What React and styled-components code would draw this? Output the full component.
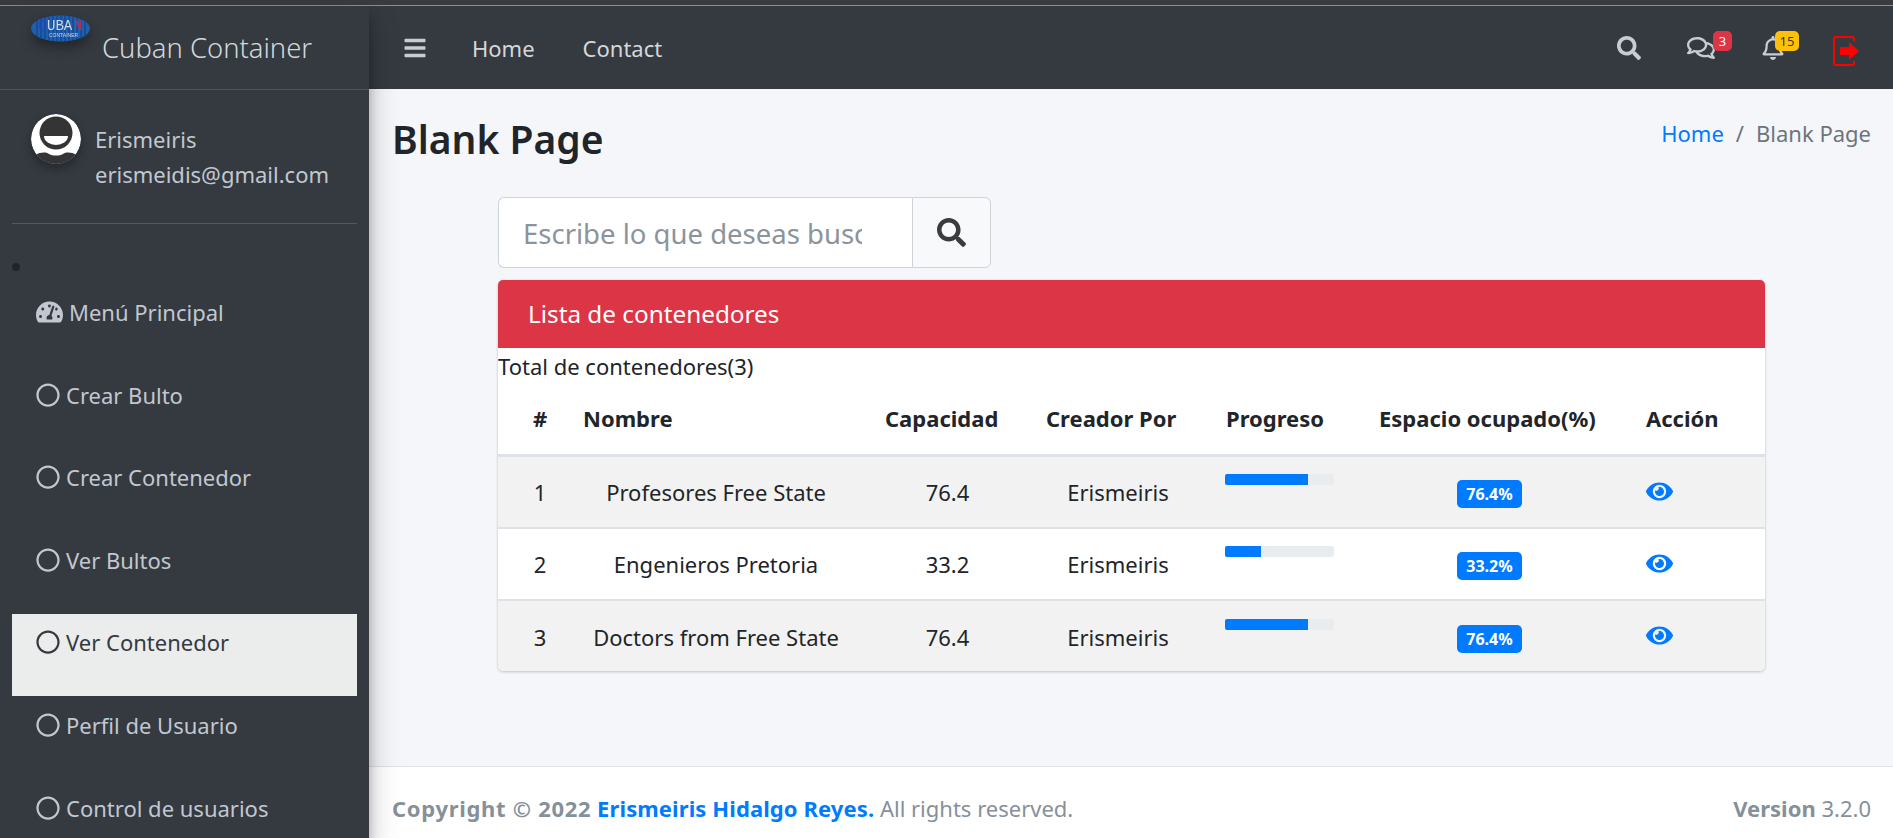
import styled, { createGlobalStyle } from 'styled-components'
import {
    FaBars,
    FaEye,
    FaRegBell,
    FaRegCircle,
    FaRegComments,
    FaSearch,
    FaTachometerAlt,
} from 'react-icons/fa'

const GlobalStyle = createGlobalStyle`
    html, body {
        margin: 0;
        height: 100%;
        overflow: hidden;
    }
    body {
        font-family: "Noto Sans", "Open Sans", sans-serif;
        font-size: 22px;
        color: #212529;
        background: #f4f6f9;
    }
    * {
        box-sizing: border-box;
    }
`;

const Page = styled.div`
    display: flex;
    flex-direction: column;
    height: 100vh;
`;

const TopStrip = styled.div`
    height: 6px;
    flex: none;
    background: #3b3b3b;
    border-bottom: 1px solid #8b8d8f;
`;

const Shell = styled.div`
    display: flex;
    flex: 1;
    min-height: 0;
`;

const Sidebar = styled.aside`
    width: 369px;
    flex: none;
    background: #343a40;
    color: #c2c7d0;
    overflow: hidden;
    position: relative;
    z-index: 2;
    box-shadow: 0 14px 28px rgba(0, 0, 0, 0.25), 0 10px 10px rgba(0, 0, 0, 0.22);
`;

const Brand = styled.div`
    display: flex;
    align-items: center;
    height: 84px;
    padding: 0 0 0 31px;
    border-bottom: 1px solid #4b545c;
    position: relative;
`;

const BrandLogo = styled.svg`
    width: 59px;
    height: 27px;
    margin: -38px 12px 0 0;
    filter: drop-shadow(0 6px 6px rgba(0, 0, 0, 0.35));
`;

const BrandName = styled.span`
    font-size: 27.4px;
    font-weight: 300;
    color: #d3d6da;
    margin-top: -1px;
`;

const UserPanel = styled.div`
    display: flex;
    margin: 0 12px;
    padding: 24px 0 0 19px;
    height: 134px;
    border-bottom: 1px solid #4f5962;
`;

const Avatar = styled.svg`
    width: 50px;
    height: 50px;
    flex: none;
    margin-right: 14px;
    border-radius: 50%;
    box-shadow: 0 5px 10px rgba(0, 0, 0, 0.3);
`;

const UserText = styled.div`
    display: flex;
    flex-direction: column;
    gap: 7px;
    padding-top: 11px;
    line-height: 28px;
`;

const Bullet = styled.div`
    width: 8px;
    height: 8px;
    margin: 39px 0 0 12px;
    border-radius: 50%;
    background: #212529;
`;

const Menu = styled.nav`
    display: flex;
    flex-direction: column;
    margin-top: 13px;
    padding: 0 12px;
`;

const MenuItem = styled.a`
    display: flex;
    align-items: flex-start;
    gap: 6px;
    height: 82px;
    margin-bottom: 0.6px;
    padding: 14px 0 0 24px;
    line-height: 28px;
    color: ${({ $active }) => ($active ? '#343a40' : '#c2c7d0')};
    background: ${({ $active }) => ($active ? '#ebecec' : 'transparent')};

    svg {
        flex: none;
        width: ${({ $wide }) => ($wide ? '27px' : '24px')};
        height: 28px;
    }
`;

const Main = styled.div`
    display: flex;
    flex: 1;
    flex-direction: column;
    min-width: 0;
`;

const Navbar = styled.header`
    display: flex;
    align-items: center;
    height: 83px;
    flex: none;
    padding: 0 34px 0 34px;
    background: #343a40;
    color: #c9ccd0;
`;

const NavLink = styled.a`
    margin-left: ${({ $gap }) => $gap}px;
    color: #d5d7da;
`;

const NavIcons = styled.div`
    display: flex;
    align-items: center;
    margin-left: auto;
`;

const NavIcon = styled.span`
    position: relative;
    display: flex;
    margin-left: ${({ $gap }) => $gap}px;
    color: #c9ccd0;
`;

const Count = styled.span`
    position: absolute;
    top: ${({ $top }) => $top}px;
    left: ${({ $left }) => $left}px;
    min-width: ${({ $warning }) => ($warning ? '24px' : '19px')};
    height: 20px;
    padding: 0 2px;
    border-radius: 5px;
    font-size: 13px;
    line-height: 20px;
    text-align: center;
    color: ${({ $warning }) => ($warning ? '#343a40' : '#fff')};
    background: ${({ $warning }) => ($warning ? '#ffc107' : '#dc3545')};
`;

const ExitIcon = styled.svg`
    width: 27px;
    height: 30px;
    margin: 6px 0 0 47px;
`;

const Content = styled.main`
    flex: 1;
    min-height: 0;
    padding: 0 22px 0 23px;
    background: #f4f6f9;
`;

const PageHeader = styled.div`
    display: flex;
    align-items: flex-start;
    justify-content: space-between;
    height: 108px;
    padding-top: 27px;
`;

const Title = styled.h1`
    margin: 0;
    font-size: 39px;
    font-weight: 600;
    line-height: 1.2;
`;

const Breadcrumb = styled.div`
    display: flex;
    gap: 12px;
    margin-top: 1px;
    line-height: 32px;
    color: #6c757d;

    a {
        color: #007bff;
    }
`;

const Panel = styled.div`
    width: 1267px;
    margin: 0 auto;
`;

const SearchGroup = styled.div`
    display: flex;
    width: 493px;
    height: 71px;
`;

const SearchInput = styled.input`
    flex: 1;
    min-width: 0;
    padding: 2px 50px 0 24px;
    border: 1px solid #ced4da;
    border-right: 0;
    border-radius: 6px 0 0 6px;
    background: #fff;
    font: 27.5px "Noto Sans", "Open Sans", sans-serif;
    outline: none;

    &::placeholder {
        color: #8b949c;
        opacity: 1;
    }
`;

const SearchButton = styled.button`
    display: flex;
    align-items: center;
    justify-content: center;
    width: 79px;
    padding: 0;
    border: 1px solid #ced4da;
    border-radius: 0 6px 6px 0;
    background: #f8f9fa;
    color: #3c3c3c;
    font-size: 29px;
`;

const Card = styled.section`
    margin-top: 12px;
    border-radius: 5px;
    background: #fff;
    box-shadow: 0 0 1px rgba(0, 0, 0, 0.125), 0 1px 3px rgba(0, 0, 0, 0.2);
    overflow: hidden;
`;

const CardHeader = styled.div`
    height: 68px;
    padding: 0 30px;
    line-height: 68px;
    font-size: 24.3px;
    color: #fff;
    background: #dc3545;
`;

const Total = styled.div`
    line-height: 36px;
    height: 33px;
    color: #212529;
`;

const Table = styled.table`
    width: 100%;
    border-collapse: collapse;
    table-layout: fixed;
`;

const Th = styled.th`
    height: 74px;
    padding: 1px 14px 0 15px;
    border-bottom: 3px solid #dee2e6;
    font-weight: 700;
    text-align: ${({ $center }) => ($center ? 'center' : 'left')};
    white-space: nowrap;
`;

const IndexTh = styled(Th)`
    padding-left: 28px;
    padding-right: 14px;
`;

const Row = styled.tr`
    height: 72.6px;
    border-bottom: 2px solid #dee2e6;
    background: ${({ $striped }) => ($striped ? '#f2f2f2' : '#fff')};

    &:last-child {
        height: 71px;
        border-bottom: 0;
    }
`;

const Td = styled.td`
    padding: 1px 17px 0 11px;
    text-align: ${({ $left }) => ($left ? 'left' : 'center')};
    vertical-align: middle;
    white-space: nowrap;
`;

const IndexTd = styled(Td)`
    padding-left: 28px;
    padding-right: 14px;
`;

const LeftTd = styled(Td)`
    padding-left: 14px;
    padding-right: 14px;
`;

const Progress = styled.div`
    width: 109px;
    height: 11px;
    margin-bottom: 25px;
    background: #e9ecef;
    border-radius: 2px;
    overflow: hidden;
`;

const ProgressFill = styled.div`
    height: 100%;
    background: #007bff;
`;

const Badge = styled.span`
    display: inline-block;
    width: 65px;
    height: 28px;
    margin-right: 10px;
    border-radius: 5px;
    background: #007bff;
    color: #fff;
    font-size: 16px;
    font-weight: 700;
    line-height: 28px;
`;

const ViewButton = styled.a`
    display: block;
    height: 27px;
    margin: 0 0 2px 1px;
    color: #007bff;
    font-size: 27px;
    line-height: 27px;
`;

const Footer = styled.footer`
    display: flex;
    align-items: center;
    justify-content: space-between;
    height: 72px;
    flex: none;
    padding: 10px 22px 0 23px;
    border-top: 1px solid #dee2e6;
    background: #fff;
    color: #869099;

    b {
        font-weight: 700;
    }

    a {
        color: #007bff;
        font-weight: 700;
        letter-spacing: 0.1px;
    }
`;

const CopyrightYear = styled.b`
    letter-spacing: 0.7px;
`;

const menuItems = [
    { label: 'Crear Bulto' },
    { label: 'Crear Contenedor' },
    { label: 'Ver Bultos' },
    { label: 'Ver Contenedor', active: true },
    { label: 'Perfil de Usuario' },
    { label: 'Control de usuarios' },
];

const containers = [
    { id: 1, name: 'Profesores Free State', capacity: 76.4 },
    { id: 2, name: 'Engenieros Pretoria', capacity: 33.2 },
    { id: 3, name: 'Doctors from Free State', capacity: 76.4 },
];

function Logo () {
    return (
        <BrandLogo viewBox="0 0 59 27">
            <ellipse cx="29.5" cy="13.5" rx="29.5" ry="13" fill="#1f5fae" />
            <path
                d="M6 5v17M10 3v21M14 2v23M18 2v23M22 1v25M26 1v25M30 1v25M34 1v25M38 1v25M42 2v23M46 2v23M50 3v21M54 5v17"
                stroke="#123f80"
                strokeWidth="1"
            />
            <text x="7" y="15" fontFamily="Liberation Mono, monospace" fontSize="14" fill="#2b3fd0">C</text>
            <text x="16" y="15" fontFamily="Liberation Mono, monospace" fontSize="14" fill="#cfd8e8">UBA</text>
            <text x="43" y="15" fontFamily="Liberation Mono, monospace" fontSize="14" fill="#b8324f">N</text>
            <text x="18" y="22" fontFamily="Liberation Sans, sans-serif" fontSize="5" fill="#cfd8e8">CONTAINER</text>
        </BrandLogo>
    )
}

function UserAvatar () {
    return (
        <Avatar viewBox="0 0 50 50">
            <circle cx="25" cy="25" r="25" fill="#fff" />
            <circle cx="25" cy="19" r="16.5" fill="#343434" />
            <path d="M13 22h24a12 9 0 0 1-24 0z" fill="#fff" />
            <path d="M5 41c4-3 10-3 13-1 4 2 10 2 14 0 3-2 9-2 13 1a25 25 0 0 1-40 0z" fill="#343434" />
        </Avatar>
    )
}

function ExitGlyph () {
    return (
        <ExitIcon viewBox="0 0 27 30" fill="none">
            <path d="M22 5V3a2 2 0 0 0-2-2H4a2 2 0 0 0-2 2v24a2 2 0 0 0 2 2h16a2 2 0 0 0 2-2v-2" stroke="#f00" strokeWidth="2" />
            <path d="M8 11h9V6l10 9-10 9v-5H8z" fill="#f00" />
        </ExitIcon>
    )
}

function App () {
    return (
        <Page>
            <GlobalStyle />
            <TopStrip />
            <Shell>
                <Sidebar>
                    <Brand>
                        <Logo />
                        <BrandName>Cuban Container</BrandName>
                    </Brand>
                    <UserPanel>
                        <UserAvatar />
                        <UserText>
                            <span>Erismeiris</span>
                            <span>erismeidis@gmail.com</span>
                        </UserText>
                    </UserPanel>
                    <Bullet />
                    <Menu>
                        <MenuItem $wide>
                            <FaTachometerAlt />
                            Menú Principal
                        </MenuItem>
                        {menuItems.map((item) => (
                            <MenuItem key={item.label} $active={item.active}>
                                <FaRegCircle />
                                {item.label}
                            </MenuItem>
                        ))}
                    </Menu>
                </Sidebar>
                <Main>
                    <Navbar>
                        <FaBars size={24} />
                        <NavLink $gap={45}>Home</NavLink>
                        <NavLink $gap={48}>Contact</NavLink>
                        <NavIcons>
                            <NavIcon><FaSearch size={24} /></NavIcon>
                            <NavIcon $gap={46}>
                                <FaRegComments size={28} />
                                <Count $left={26} $top={-3}>3</Count>
                            </NavIcon>
                            <NavIcon $gap={46}>
                                <FaRegBell size={24} />
                                <Count $left={14} $top={-5} $warning>15</Count>
                            </NavIcon>
                            <ExitGlyph />
                        </NavIcons>
                    </Navbar>
                    <Content>
                        <PageHeader>
                            <Title>Blank Page</Title>
                            <Breadcrumb>
                                <a>Home</a>
                                <span>/</span>
                                <span>Blank Page</span>
                            </Breadcrumb>
                        </PageHeader>
                        <Panel>
                            <SearchGroup>
                                <SearchInput placeholder="Escribe lo que deseas buscar" />
                                <SearchButton><FaSearch /></SearchButton>
                            </SearchGroup>
                            <Card>
                                <CardHeader>Lista de contenedores</CardHeader>
                                <Total>Total de contenedores(3)</Total>
                                <Table>
                                    <colgroup>
                                        <col width="70" />
                                        <col width="302" />
                                        <col width="161" />
                                        <col width="180" />
                                        <col width="153" />
                                        <col width="267" />
                                        <col width="134" />
                                    </colgroup>
                                    <thead>
                                        <tr>
                                            <IndexTh $center>#</IndexTh>
                                            <Th>Nombre</Th>
                                            <Th>Capacidad</Th>
                                            <Th>Creador Por</Th>
                                            <Th>Progreso</Th>
                                            <Th>Espacio ocupado(%)</Th>
                                            <Th>Acción</Th>
                                        </tr>
                                    </thead>
                                    <tbody>
                                        {containers.map((row) => (
                                            <Row key={row.id} $striped={row.id % 2 === 1}>
                                                <IndexTd>{row.id}</IndexTd>
                                                <Td>{row.name}</Td>
                                                <Td>{row.capacity}</Td>
                                                <Td>Erismeiris</Td>
                                                <LeftTd $left>
                                                    <Progress>
                                                        <ProgressFill style={{ width: `${row.capacity}%` }} />
                                                    </Progress>
                                                </LeftTd>
                                                <Td><Badge>{row.capacity}%</Badge></Td>
                                                <LeftTd $left><ViewButton><FaEye /></ViewButton></LeftTd>
                                            </Row>
                                        ))}
                                    </tbody>
                                </Table>
                            </Card>
                        </Panel>
                    </Content>
                    <Footer>
                        <span>
                            <CopyrightYear>Copyright © 2022</CopyrightYear> <b><a>Erismeiris Hidalgo Reyes.</a></b> All rights reserved.
                        </span>
                        <span><b>Version</b> 3.2.0</span>
                    </Footer>
                </Main>
            </Shell>
        </Page>
    )
}

export default App
